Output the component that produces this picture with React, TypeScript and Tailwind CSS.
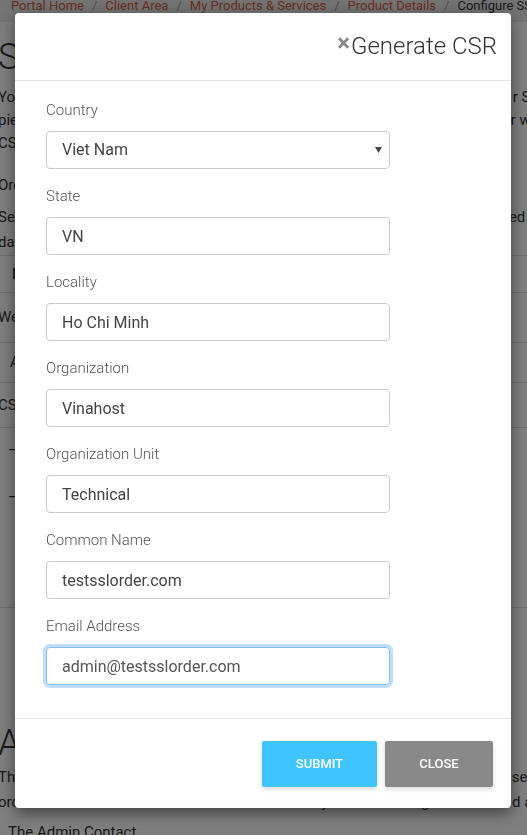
import React from "react";

const fields = [
  { label: "State", value: "VN" },
  { label: "Locality", value: "Ho Chi Minh" },
  { label: "Organization", value: "Vinahost" },
  { label: "Organization Unit", value: "Technical" },
  { label: "Common Name", value: "testsslorder.com" },
];

const BackgroundPage = () => (
  <div className="min-h-screen bg-white text-[#333] overflow-hidden">
    {/* Breadcrumb */}
    <div className="h-[22px] bg-[#e9e9e9] pl-[11px] text-[13px] leading-[12px] whitespace-nowrap overflow-hidden">
      <span className="text-[#d2593c]">Portal Home</span>
      <span className="text-[#999] px-[8px]">/</span>
      <span className="text-[#d2593c]">Client Area</span>
      <span className="text-[#999] px-[8px]">/</span>
      <span className="text-[#d2593c]">My Products &amp; Services</span>
      <span className="text-[#999] px-[8px]">/</span>
      <span className="text-[#d2593c]">Product Details</span>
      <span className="text-[#999] px-[8px]">/</span>
      <span>Configure SSL Certificate</span>
    </div>

    <div className="-ml-[2px] whitespace-nowrap">
      <h1 className="mt-[15px] text-[36px] leading-[40px] font-light">SSL Configuration</h1>

      <div className="mt-[9px] text-[15px] leading-[23px]">
        <p>You have ordered an SSL certificate which requires configuration before it c... r S</p>
        <p>pieces of information. You will need to generate the CSR from your web server wi</p>
        <p>CSR is required. <span className="text-[#3b2a7a]">Click here to learn more about the CSR generation</span></p>
      </div>

      <p className="mt-[19px] text-[15px] leading-[23px]">Order Details: SSL Certificate</p>

      <div className="mt-[8px] text-[15px] leading-[25px]">
        <p>Select your server software and paste your CSR below. The CSR will be checked on</p>
        <p>days of processing.</p>
      </div>

      {/* Table */}
      <div className="border-t border-[#ddd] text-[15px]">
        <div className="h-[37px] flex items-center pl-[14px] border-b border-[#ddd] font-medium">
          Name
        </div>
        <div className="h-[50px] flex items-center border-b border-[#ddd]">Web Server Type</div>
        <div className="h-[40px] flex items-center pl-[12px] border-b border-[#ddd]">Auto</div>
        <div className="h-[45px] flex items-center border-b border-[#ddd]">CSR</div>
        <div className="h-[180px] border-b border-[#ddd] pl-[10px] pt-[10px]">
          <p className="leading-[24px]">—</p>
          <p className="mt-[23px] leading-[24px]">—</p>
        </div>
      </div>

      <h2 className="mt-[115px] text-[36px] leading-[40px] font-light">Additional Information</h2>
      <div className="mt-[2px] text-[15px] leading-[25px]">
        <p>The information provided below is used to verify your certificate request. Please ensure you</p>
        <p>orcanisation details match the records held with your domain registrar to avoid any problem</p>
        <p className="mt-[5px] pl-[10px]">The Admin Contact</p>
      </div>
    </div>
  </div>
);

const FieldLabel = ({ children }: { children: React.ReactNode }) => (
  <label className="block mb-[10px] text-[15px] leading-[21px] font-light text-[#555]">{children}</label>
);

export default function App() {
  return (
    <div className="relative font-[Roboto,sans-serif]">
      <BackgroundPage />

      {/* Backdrop */}
      <div className="fixed inset-0 bg-black/50" />

      {/* Modal */}
      <div className="fixed left-[15px] top-[13px] w-[496px] rounded-[4px] bg-white shadow-[0_5px_15px_rgba(0,0,0,0.5)]">
        <div className="h-[68px] flex items-start justify-end pt-[19px] pr-[14px] border-b border-[#e5e5e5]">
          <button className="-mt-[1px] text-[24px] leading-[24px] font-bold text-[#888]">×</button>
          <h4 className="ml-[1px] text-[24px] leading-[29px] font-light text-[#333]">Generate CSR</h4>
        </div>

        <div className="px-[31px] pt-[19px] pb-[16px]">
          <div className="mb-[17px]">
            <FieldLabel>Country</FieldLabel>
            <div className="relative w-[344px]">
              <select
                defaultValue="Viet Nam"
                className="appearance-none block w-full h-[38px] px-[15px] border border-[#ccc] rounded-[4px] bg-white text-[16px] text-[#444] outline-none"
              >
                <option>Viet Nam</option>
              </select>
              <svg
                className="absolute right-[8px] top-[16px] w-[7px] h-[6px] pointer-events-none"
                viewBox="0 0 7 6"
              >
                <path d="M0 0h7L3.5 6z" fill="#444" />
              </svg>
            </div>
          </div>

          {fields.map((f) => (
            <div key={f.label} className="mb-[17px]">
              <FieldLabel>{f.label}</FieldLabel>
              <input
                readOnly
                value={f.value}
                className="block w-[344px] h-[38px] px-[15px] border border-[#ccc] rounded-[4px] text-[16px] text-[#444] outline-none"
              />
            </div>
          ))}

          <div className="mb-[17px]">
            <FieldLabel>Email Address</FieldLabel>
            <input
              readOnly
              value="admin@testsslorder.com"
              className="block w-[344px] h-[38px] px-[15px] border border-[#80bdff] rounded-[4px] text-[16px] text-[#555] outline-none shadow-[0_0_0_3px_rgba(128,189,255,0.5)]"
            />
          </div>
        </div>

        <div className="flex justify-end gap-[8px] pt-[22px] pb-[21px] pr-[18px] border-t border-[#e5e5e5]">
          <button className="w-[115px] h-[46px] rounded-[2px] bg-[#40c4ff] text-white text-[13px] font-medium uppercase shadow-[0_2px_5px_rgba(0,0,0,0.16)]">
            Submit
          </button>
          <button className="w-[108px] h-[46px] rounded-[2px] bg-[#898989] text-white text-[13px] font-medium uppercase shadow-[0_2px_5px_rgba(0,0,0,0.16)]">
            Close
          </button>
        </div>
      </div>
    </div>
  );
}
